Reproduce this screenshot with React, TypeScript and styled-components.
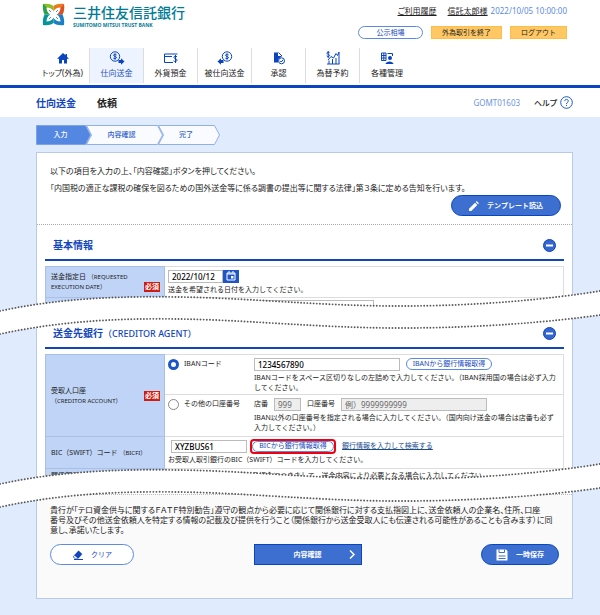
import React from "react";
import styled, { createGlobalStyle } from "styled-components";

const GlobalStyle = createGlobalStyle`
  * { box-sizing: border-box; }
  body {
    margin: 0;
    background: #e0ebfe;
    color: #222;
    font: 8px/10px "Noto Sans", "Noto Sans CJK JP", sans-serif;
    font-feature-settings: "palt";
  }
  button, input { font: inherit; color: inherit; }
  button { cursor: pointer; font-size: 7px; font-feature-settings: normal; }
  h1, h2, p { margin: 0; }
`;

const Header = styled.header`
  background: #fff;
  padding: 2px 33px 0 42px;
  border-bottom: 3px solid #0b44c0;
`;
const HeaderTop = styled.div`
  display: flex;
  justify-content: space-between;
  height: 46px;
`;
const Brand = styled.a`
  display: flex;
  align-items: flex-start;
  gap: 8px;
  color: #007b98;
  text-decoration: none;
  svg { margin-top: 1px; }
`;
const BrandText = styled.span`
  display: flex;
  flex-direction: column;
`;
const BrandName = styled.span`
  font: 500 14px/20px "Noto Sans CJK JP", sans-serif;
  font-feature-settings: normal;
`;
const BrandSub = styled.span`
  font: 700 5px/6px "Open Sans", "Noto Sans", sans-serif;
`;
const Account = styled.div`
  display: flex;
  flex-direction: column;
  align-items: flex-end;
  gap: 10px;
  padding-top: 4px;
`;
const AccountLine = styled.div`
  display: flex;
  gap: 3px;
  color: #5c8be0;
`;
const DarkLink = styled.a<{ $gap?: boolean; $blue?: boolean }>`
  color: ${(p) => (p.$blue ? "#1b4b8f" : "#222")};
  text-decoration: underline;
  margin-right: ${(p) => (p.$gap ? "8px" : "0")};
`;
const AccountButtons = styled.div`
  display: flex;
  gap: 8px;
`;
const OutlineButton = styled.button<{ $w: number; $h: number }>`
  width: ${(p) => p.$w}px;
  height: ${(p) => p.$h}px;
  padding: 0;
  display: inline-flex;
  align-items: center;
  justify-content: center;
  gap: 8px;
  border: 1px solid #5b8ae0;
  border-radius: 12px;
  background: #fff;
  color: #1747bd;
  white-space: nowrap;
`;
const OrangeButton = styled.button<{ $w: number }>`
  width: ${(p) => p.$w}px;
  height: 13px;
  padding: 0;
  line-height: 10px;
  border: 1px solid #ffbd45;
  background: #ffc864;
  white-space: nowrap;
`;
const Nav = styled.nav`
  display: flex;
  margin-left: -6px;
  padding-bottom: 2px;
`;
const Tab = styled.a<{ $active?: boolean }>`
  width: 54px;
  height: 35px;
  display: flex;
  flex-direction: column;
  align-items: center;
  gap: 3px;
  padding-top: 3px;
  border-right: 1px solid #ddd;
  background: ${(p) => (p.$active ? "#edf4ff" : "#fff")};
  color: ${(p) => (p.$active ? "#1f53c5" : "#222")};
  text-decoration: none;
  white-space: nowrap;
  &:last-child { border-right: 0; }
  svg { color: #0b44c0; }
`;
const TitleBar = styled.div`
  display: flex;
  align-items: center;
  height: 29px;
  padding: 0 27px 0 36px;
  background: #fff;
`;
const Title = styled.h1`
  flex: 1;
  display: flex;
  gap: 21px;
  font-size: 10px;
  line-height: 14px;
  font-weight: 700;
  font-feature-settings: normal;
`;
const Blue = styled.span`
  color: #1246bd;
`;
const ScreenId = styled.span`
  color: #6e96e0;
  margin-right: 14px;
`;
const Help = styled.a`
  display: flex;
  align-items: center;
  gap: 3px;
  color: #222;
  text-decoration: none;
  font-weight: 500;
`;
const Main = styled.main`
  padding: 8px 27px 16px 36px;
`;
const StepShape = styled.svg`
  position: absolute;
  inset: 0;
  width: 100%;
  height: 100%;
`;
const StepList = styled.ol`
  display: flex;
  margin: 0 0 7px;
  padding: 0;
  list-style: none;
`;
const Step = styled.li<{ $w: number; $current?: boolean }>`
  position: relative;
  width: ${(p) => p.$w}px;
  height: 20px;
  display: flex;
  align-items: center;
  justify-content: center;
  color: ${(p) => (p.$current ? "#fff" : "#2a5cc9")};
  font-size: 7px;
  font-weight: 500;
  font-feature-settings: normal;
  & + & { margin-left: -5px; }
  span { position: relative; padding-right: 6px; }
  & + & span { padding: 0 0 0 3px; }
`;
const Panel = styled.div`
  background: #fff;
  border: 1px solid #b9cae6;
`;
const Intro = styled.div`
  padding: 13px 11px 8px 13px;
  border-bottom: 1px dotted #aaa;
  display: flex;
  flex-direction: column;
  p + p { margin: 7px 0 2px; }
`;
const SolidButton = styled.button<{ $w: number; $round?: boolean; $right?: boolean }>`
  width: ${(p) => p.$w}px;
  height: 21px;
  padding: 0 10px;
  display: flex;
  align-items: center;
  justify-content: center;
  gap: 8px;
  ${(p) => (p.$right ? "align-self: flex-end;" : "")}
  border: 1px solid #0b44c0;
  border-radius: ${(p) => (p.$round ? "11px" : "0")};
  background: #3d6fd0;
  color: #fff;
  font-weight: 700;
  white-space: nowrap;
`;
const SectionBox = styled.section`
  padding: 0 8px;
`;
const SectionHead = styled.div<{ $h: number }>`
  height: ${(p) => p.$h}px;
  display: flex;
  align-items: center;
  justify-content: space-between;
  padding: 6px 8px 0;
  border-bottom: 2px solid #1444b8;
  margin-bottom: 5px;
  h2 {
    font-size: 10px;
    line-height: 14px;
    font-weight: 700;
    font-feature-settings: normal;
    color: #1246bd;
  }
  small { font-size: 9px; font-weight: 500; }
`;
const FoldButton = styled.button`
  width: 13px;
  height: 13px;
  padding: 0;
  border: 0;
  background: none;
  svg { display: block; }
`;
const FormTable = styled.table`
  width: 100%;
  border-collapse: collapse;
  table-layout: fixed;
  font-size: 7px;
  font-feature-settings: normal;
`;
const LabelCell = styled.th`
  width: 119px;
  padding: 0 4px 0 5px;
  border: 1px solid #a9bfe3;
  background: #bfd4f6;
  font-weight: 400;
  text-align: left;
  small { font-size: 6px; }
`;
const LabelRow = styled.div<{ $end?: boolean }>`
  display: flex;
  justify-content: space-between;
  align-items: ${(p) => (p.$end ? "flex-end" : "center")};
  white-space: nowrap;
`;
const Required = styled.span`
  flex: none;
  width: 16px;
  background: #d01b12;
  color: #fff;
  text-align: center;
  font-weight: 700;
`;
const ValueCell = styled.td<{ $h: number; $dotted?: boolean }>`
  height: ${(p) => p.$h}px;
  padding: 2px 3px 0;
  vertical-align: top;
  border: 1px solid #ddd;
  ${(p) => (p.$dotted ? "border-bottom: 1px dotted #999;" : "")}
`;
const FieldLine = styled.div`
  display: flex;
  align-items: center;
  height: 14px;
  gap: 6px;
  margin-bottom: 2px;
`;
const TextBox = styled.input<{ $w: number }>`
  width: ${(p) => p.$w}px;
  height: 13px;
  padding: 0 3px;
  border: 1px solid #bbb;
  background: #fff;
  color: #000;
  font-size: 8px;
  font-weight: 500;
  &:disabled { background: #eee; color: #666; }
  &::placeholder { color: #666; font-weight: 400; opacity: 1; }
`;
const CalendarButton = styled.button`
  width: 16px;
  height: 13px;
  padding: 0;
  margin-left: -6px;
  border: 0;
  background: #1f55c6;
  color: #fff;
  display: grid;
  place-items: center;
`;
const Choice = styled.div`
  display: grid;
  grid-template-columns: 86px 1fr;
`;
const Note = styled.div`
  padding-right: 4px;
`;
const RadioLabel = styled.label`
  display: flex;
  align-items: center;
  gap: 5px;
  height: 14px;
`;
const Radio = styled.input`
  appearance: none;
  width: 11px;
  height: 11px;
  margin: 0;
  border: 1px solid #888;
  border-radius: 50%;
  background: #fff;
  &:checked { border: 3px solid #1c55c8; }
`;
const BicLine = styled(FieldLine)`
  padding-left: 3px;
`;
const Highlight = styled.span`
  display: inline-flex;
  margin-left: -3px;
  border: 2px solid #f00010;
  border-radius: 4px;
`;
const Tear = styled.svg<{ $up: number; $down: number }>`
  display: block;
  position: relative;
  width: calc(100% + 65px);
  height: 46px;
  margin: -${(p) => p.$up}px -28px -${(p) => p.$down}px -37px;
  pointer-events: none;
`;
const Footer = styled.footer`
  border-top: 1px dotted #bbb;
  background: #fafafa;
  padding: 10px 13px 33px;
`;
const Actions = styled.div`
  display: flex;
  justify-content: space-between;
  margin-top: 9px;
`;
const ConfirmButton = styled(SolidButton)`
  display: grid;
  grid-template-columns: 1fr auto 1fr;
  padding: 0 6px;
  svg { justify-self: end; }
`;

const TEAR_TOP = "M0 21C60 8 120 6 180 7C250 8 320 16 400 16C480 16 550 9 600 1";
const TEAR_BOTTOM = "M0 44C60 31 120 28 180 29C250 30 320 38 400 38C480 38 550 32 600 25";

function PageTear({ up, down }: { up: number; down: number }) {
  return (
    <Tear $up={up} $down={down} viewBox="0 0 600 46" preserveAspectRatio="none" aria-hidden>
      <path
        d={TEAR_TOP + "V25C550 32 480 38 400 38C320 38 250 30 180 29C120 28 60 31 0 44Z"}
        fill="#fff"
      />
      <g fill="none" stroke="#5a5a5a" strokeWidth="1.9" strokeLinecap="round" strokeDasharray="0 3.15">
        <path d={TEAR_TOP} />
        <path d={TEAR_BOTTOM} />
      </g>
    </Tear>
  );
}

function Logo() {
  return (
    <svg width="23" height="23" viewBox="0 0 23 23">
      <path d="M11.500 11.500L2.500 11.500C1 8 0.500 5 1 1C3 1 4 1.200 6 1.800Z" fill="#2f9e49" />
      <path d="M11.500 11.500L1.500 1C5 0.500 9 1 11.500 3Z" fill="#8cbf26" />
      <path d="M11.500 11.500V3C14 1 18 0.500 22 1C22.500 5 22 8 20.500 11.500Z" fill="#ec7a1c" />
      <path d="M11.500 11.500L22 1.500C22.500 5 22 8 20.500 11.500Z" fill="#dd4f26" />
      <path d="M11.500 11.500H20.500C22 15 22.500 18 22 22C18 22.500 14 22 11.500 20Z" fill="#1a7fc4" />
      <path d="M11.500 11.500H2.500C1 15 0.500 18 1 22C5 22.500 9 22 11.500 20Z" fill="#06949b" />
      <path
        d="M11.500 8.500C10.500 6 7.500 4.500 4.500 4.500C4.500 7.500 6 10.500 8.500 11.500C6 12.500 4.500 15.500 4.500 18.500C7.500 18.500 10.500 17 11.500 14.500C12.500 17 15.500 18.500 18.500 18.500C18.500 15.500 17 12.500 14.500 11.500C17 10.500 18.500 7.500 18.500 4.500C15.500 4.500 12.500 6 11.500 8.500Z"
        fill="#fff"
      />
      <path d="M7 7L9 9M16 7L14 9M7 16L9 14M16 16L14 14" stroke="#1b7f8c" strokeWidth="0.800" />
    </svg>
  );
}

const CoinGlyph = ({ x }: { x: number }) => (
  <g>
    <circle cx={x} cy="5.500" r="4.700" />
    <path d={`M${x + 1.6} 4C${x + 0.8} 3 ${x - 1.6} 3 ${x - 1.4} 4.400C${x - 1.2} 5.800 ${x + 1.6} 5.200 ${x + 1.5} 6.700C${x + 1.3} 8 ${x - 1} 8 ${x - 1.7} 7M${x} 2.300V8.700`} />
  </g>
);

const navIcons: Record<string, React.ReactNode> = {
  home: <path d="M8 2L2 7.800H4V12.500H7V9H9V12.500H12V7.800H14L12 5.800V3H10.500V4.300Z" fill="currentColor" stroke="none" />,
  send: (
    <>
      <CoinGlyph x={6} />
      <path d="M9.500 9H12V7.200L15.500 10.500L12 13.800V12H9.500Z" fill="currentColor" stroke="none" />
    </>
  ),
  deposit: (
    <>
      <path d="M10 11.500H1.500V3H14.500M1.500 5.500H9" />
      <path d="M14 5.800C13 4.800 10.500 5 11 6.700C11.400 8.300 14.200 7.500 14 9.300C13.700 10.900 11.500 10.800 10.500 9.800M12.500 4V12" />
    </>
  ),
  receive: (
    <>
      <CoinGlyph x={10} />
      <path d="M6.500 9H4V7.200L0.500 10.500L4 13.800V12H6.500Z" fill="currentColor" stroke="none" />
    </>
  ),
  approve: (
    <>
      <path d="M3 1.500H7V5H10.500V6C8 6.500 6.500 8.500 7 11.500H3Z" fill="currentColor" stroke="none" />
      <path d="M7.500 1.500L11 5" />
      <circle cx="10.500" cy="9.800" r="3" />
      <path d="M9 9.800L10.200 11L12.200 8.700" />
    </>
  ),
  rate: (
    <>
      <path d="M4.600 1.700C3.500 0.700 1.600 1.200 2 2.500C2.400 3.700 4.800 3.200 4.600 4.600C4.300 5.900 2.300 5.700 1.700 4.900M3.200 0V7M2 13H14.500M4 13V9.500M7.500 13V8M11 13V7M14 13V1" />
      <path d="M3 9L6 5.500L8.500 7L11 2.500L12.500 4.500L14 1" />
    </>
  ),
  admin: (
    <>
      <path d="M2.500 2H7V9.500H2.500ZM4.800 2V9.500M2.500 4.500H7M2.500 7H7M8.500 2.500H13.500V5" />
      <circle cx="11" cy="7" r="2" fill="currentColor" stroke="none" />
      <path d="M6.500 13C7 9.500 14 9.500 14.500 13Z" fill="currentColor" stroke="none" />
    </>
  ),
};

const tabs = [
  { icon: "home", label: "トップ(外為)" },
  { icon: "send", label: "仕向送金", active: true },
  { icon: "deposit", label: "外貨預金" },
  { icon: "receive", label: "被仕向送金" },
  { icon: "approve", label: "承認" },
  { icon: "rate", label: "為替予約" },
  { icon: "admin", label: "各種管理" },
];

function SectionTitle({ height, children }: { height: number; children: React.ReactNode }) {
  return (
    <SectionHead $h={height}>
      <h2>{children}</h2>
      <FoldButton aria-label="閉じる">
        <svg width="13" height="13" viewBox="0 0 13 13">
          <circle cx="6.500" cy="6.500" r="6" fill="#3466cb" stroke="#0b44c0" />
          <path d="M3 6.500H10" stroke="#fff" strokeWidth="2" />
        </svg>
      </FoldButton>
    </SectionHead>
  );
}

export default function App() {
  return (
    <>
      <GlobalStyle />
      <Header>
        <HeaderTop>
          <Brand href="#">
            <Logo />
            <BrandText>
              <BrandName>三井住友信託銀行</BrandName>
              <BrandSub>SUMITOMO MITSUI TRUST BANK</BrandSub>
            </BrandText>
          </Brand>
          <Account>
            <AccountLine>
              <DarkLink href="#" $gap>ご利用履歴</DarkLink>
              <DarkLink href="#">信託太郎様</DarkLink>
              <span>2022/10/05 10:00:00</span>
            </AccountLine>
            <AccountButtons>
              <OutlineButton $w={65} $h={13}>公示相場</OutlineButton>
              <OrangeButton $w={71}>外為取引を終了</OrangeButton>
              <OrangeButton $w={57}>ログアウト</OrangeButton>
            </AccountButtons>
          </Account>
        </HeaderTop>
        <Nav>
          {tabs.map((t) => (
            <Tab key={t.label} href="#" $active={t.active}>
              <svg width="16" height="14" viewBox="0 0 16 14" fill="none" stroke="currentColor">
                {navIcons[t.icon]}
              </svg>
              {t.label}
            </Tab>
          ))}
        </Nav>
      </Header>
      <TitleBar>
        <Title>
          <Blue>仕向送金</Blue>
          <span>依頼</span>
        </Title>
        <ScreenId>GOMT01603</ScreenId>
        <Help href="#">
          ヘルプ
          <svg width="13" height="13" viewBox="0 0 13 13" fill="none" stroke="#1f57c8">
            <circle cx="6.500" cy="6.500" r="5.800" />
            <path d="M4.700 5.200C4.700 2.800 8.300 2.900 8.300 5C8.300 6.500 6.500 6.300 6.500 8M6.500 8.900V10" />
          </svg>
        </Help>
      </TitleBar>
      <Main>
        <StepList>
          <Step $w={55} $current>
            <StepShape viewBox="0 0 55 20" preserveAspectRatio="none" aria-hidden>
              <path d="M0.500 0.500H49.500L54.500 10L49.500 19.500H0.500Z" fill="#5487e2" stroke="#7da3e6" />
            </StepShape>
            <span>入力</span>
          </Step>
          <Step $w={77}>
            <StepShape viewBox="0 0 77 20" preserveAspectRatio="none" aria-hidden>
              <path d="M0.500 0.500H71.500L76.500 10L71.500 19.500H0.500L5.500 10Z" fill="#fafbfe" stroke="#8fb0e8" />
            </StepShape>
            <span>内容確認</span>
          </Step>
          <Step $w={62}>
            <StepShape viewBox="0 0 62 20" preserveAspectRatio="none" aria-hidden>
              <path d="M0.500 0.500H56.500L61.500 10L56.500 19.500H0.500L5.500 10Z" fill="#fafbfe" stroke="#8fb0e8" />
            </StepShape>
            <span>完了</span>
          </Step>
        </StepList>
        <Panel>
          <Intro>
            <p>以下の項目を入力の上、「内容確認」ボタンを押してください。</p>
            <p>「内国税の適正な課税の確保を図るための国外送金等に係る調書の提出等に関する法律」第３条に定める告知を行います。</p>
            <SolidButton $w={110} $round $right>
              <svg width="10" height="10" viewBox="0 0 10 10" fill="#fff">
                <path d="M0 10V7.700L6 1.700L8.300 4L2.300 10ZM6.700 1L7.700 0L10 2.300L9 3.300Z" />
              </svg>
              テンプレート読込
            </SolidButton>
          </Intro>
          <SectionBox>
            <SectionTitle height={36}>基本情報</SectionTitle>
            <FormTable>
              <tbody>
                <tr>
                  <LabelCell scope="row">
                    <LabelRow $end>
                      <label htmlFor="date">
                        送金指定日 <small>（REQUESTED<br />EXECUTION DATE）</small>
                      </label>
                      <Required>必須</Required>
                    </LabelRow>
                  </LabelCell>
                  <ValueCell $h={31}>
                    <FieldLine>
                      <TextBox id="date" $w={55} defaultValue="2022/10/12" />
                      <CalendarButton aria-label="カレンダー">
                        <svg width="10" height="10" viewBox="0 0 10 10" fill="none" stroke="currentColor">
                          <path d="M1 2H9V9H1ZM1 3H9M3 0V2M7 0V2" />
                          <path d="M5 5H7.500V7.500H5Z" fill="currentColor" stroke="none" />
                        </svg>
                      </CalendarButton>
                    </FieldLine>
                    送金を希望される日付を入力してください。
                  </ValueCell>
                </tr>
                <tr>
                  <LabelCell />
                  <ValueCell $h={14}>
                    <TextBox $w={206} aria-label="摘要" />
                  </ValueCell>
                </tr>
              </tbody>
            </FormTable>
          </SectionBox>
          <PageTear up={24} down={22} />
          <SectionBox>
            <SectionTitle height={35}>
              送金先銀行<small>（CREDITOR AGENT）</small>
            </SectionTitle>
            <FormTable>
              <tbody>
                <tr>
                  <LabelCell scope="rowgroup" rowSpan={2}>
                    <LabelRow>
                      <span>
                        受取人口座
                        <br />
                        <small>（CREDITOR ACCOUNT）</small>
                      </span>
                      <Required>必須</Required>
                    </LabelRow>
                  </LabelCell>
                  <ValueCell $h={40} $dotted>
                    <Choice>
                      <RadioLabel>
                        <Radio type="radio" name="account" defaultChecked />
                        IBANコード
                      </RadioLabel>
                      <div>
                        <FieldLine>
                          <TextBox $w={146} defaultValue="1234567890" aria-label="IBANコード" />
                          <OutlineButton $w={86} $h={12}>IBANから銀行情報取得</OutlineButton>
                        </FieldLine>
                        <Note>
                          IBANコードをスペース区切りなしの左詰めで入力してください。（IBAN採用国の場合は必ず入力してください。
                        </Note>
                      </div>
                    </Choice>
                  </ValueCell>
                </tr>
                <tr>
                  <ValueCell $h={42}>
                    <Choice>
                      <RadioLabel>
                        <Radio type="radio" name="account" />
                        その他の口座番号
                      </RadioLabel>
                      <div>
                        <FieldLine>
                          <label htmlFor="branch">店番</label>
                          <TextBox id="branch" $w={27} placeholder="999" disabled />
                          <label htmlFor="number">口座番号</label>
                          <TextBox id="number" $w={146} placeholder="例）9999999999" disabled />
                        </FieldLine>
                        <Note>
                          IBAN以外の口座番号を指定される場合に入力してください。（国内向け送金の場合は店番も必ず
                          <br />
                          入力してください。）
                        </Note>
                      </div>
                    </Choice>
                  </ValueCell>
                </tr>
                <tr>
                  <LabelCell scope="row">
                    <label htmlFor="bic">
                      BIC（SWIFT）コード <small>（BICFI）</small>
                    </label>
                  </LabelCell>
                  <ValueCell $h={32}>
                    <BicLine>
                      <TextBox id="bic" $w={76} defaultValue="XYZBUS61" />
                      <Highlight>
                        <OutlineButton $w={82} $h={11}>BICから銀行情報取得</OutlineButton>
                      </Highlight>
                      <DarkLink href="#" $blue>銀行情報を入力して検索する</DarkLink>
                    </BicLine>
                    お受取人取引銀行のBIC（SWIFT）コードを入力してください。
                  </ValueCell>
                </tr>
                <tr>
                  <LabelCell scope="row">関係銀行</LabelCell>
                  <ValueCell $h={14}>
                    関係銀行が取引銀行と異なる場合につきまして、送金内容により必要となる場合に入力してください。
                  </ValueCell>
                </tr>
              </tbody>
            </FormTable>
          </SectionBox>
          <PageTear up={20} down={15} />
          <Footer>
            <p>
              貴行が「テロ資金供与に関するＦＡＴＦ特別勧告」遵守の観点から必要に応じて関係銀行に対する支払指図上に、送金依頼人の企業名、住所、口座
              <br />
              番号及びその他送金依頼人を特定する情報の記載及び提供を行うこと（関係銀行から送金受取人にも伝達される可能性があることも含みます）に同
              <br />
              意し、承諾いたします。
            </p>
            <Actions>
              <OutlineButton $w={84} $h={21}>
                <svg width="11" height="10" viewBox="0 0 11 10">
                  <path d="M6.500 0.600L10.300 4L6.500 8.500H2.500L0.800 6.800Z" fill="#1246bd" />
                  <path d="M2.500 5.500L5.300 8H3L1.600 6.700Z" fill="#fff" />
                  <path d="M2 9.500H11" stroke="#1246bd" />
                </svg>
                クリア
              </OutlineButton>
              <ConfirmButton $w={108}>
                <span />
                内容確認
                <svg width="6" height="9" viewBox="0 0 6 9" fill="none" stroke="#fff" strokeWidth="1.500">
                  <path d="M1 0.500L5 4.500L1 8.500" />
                </svg>
              </ConfirmButton>
              <SolidButton $w={78} $round>
                <svg width="12" height="12" viewBox="0 0 12 12">
                  <path d="M0.500 0.500H10L11.500 2V11.500H0.500Z" fill="#fff" />
                  <path d="M3 0.500V3.500H8.500V0.500M2.500 7H9.500M2.500 9.500H9.500" fill="none" stroke="#3d6fd0" />
                </svg>
                一時保存
              </SolidButton>
            </Actions>
          </Footer>
        </Panel>
      </Main>
    </>
  );
}
